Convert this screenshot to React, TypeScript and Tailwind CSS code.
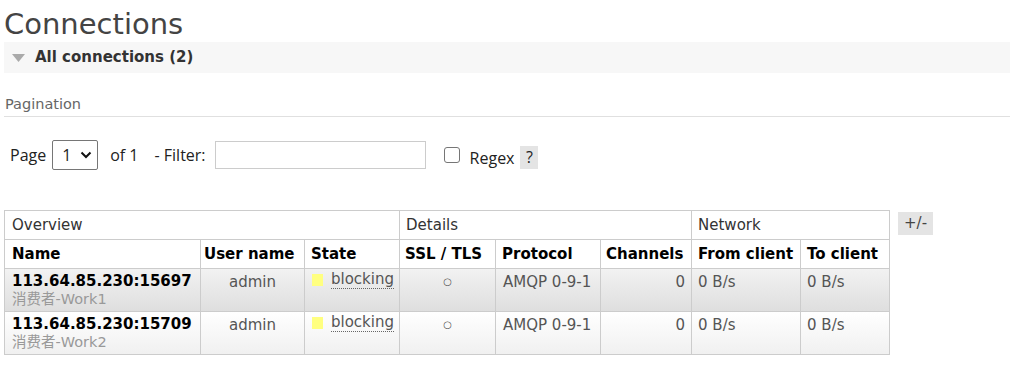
import React from "react";

const rows = [
  { name: "113.64.85.230:15697", client: "消费者-Work1", alt: true },
  { name: "113.64.85.230:15709", client: "消费者-Work2", alt: false },
];

const verdana = "font-['DejaVu_Sans','Noto_Sans_CJK_SC',sans-serif]";
const ui = "font-['Open_Sans','Noto_Sans',sans-serif]";

export default function App() {
  return (
    <div className={`${verdana} min-h-[369px] bg-white text-[#484848]`}>
      <h1 className="pl-[4px] pt-[6px] text-[29px] leading-[36px] text-[#444]">Connections</h1>

      {/* Section toggle */}
      <div className="ml-[4px] flex h-[31px] items-center bg-[#f7f7f7] pl-[8px]">
        <svg width="13" height="8" viewBox="0 0 13 8" className="mr-[10px]" aria-hidden>
          <path d="M0 0h13L6.5 8z" fill="#aaa" />
        </svg>
        <span className="text-[15px] font-bold text-[#333]">All connections (2)</span>
      </div>

      <div className="ml-[4px] mt-[22px] border-b border-[#e0e0e0] pb-[3px] pl-[1px] text-[14.5px] leading-[18px] text-[#666]">
        Pagination
      </div>

      {/* Pagination form */}
      <div className={`${ui} mt-[23px] flex items-center pl-[10px] text-[16px] text-[#222]`}>
        <span>Page</span>
        <div className="ml-[6px] flex h-[30px] w-[46px] items-center justify-between rounded-[2px] border border-[#767676] pl-[9px] pr-[5px]">
          <span>1</span>
          <svg width="12" height="8" viewBox="0 0 12 8" aria-hidden>
            <path d="M1.5 1.5l4.5 4.5 4.5-4.5" fill="none" stroke="#111" strokeWidth="2" />
          </svg>
        </div>
        <span className="ml-[12px]">of 1</span>
        <span className="ml-[16px]">- Filter:</span>
        <div className="ml-[9px] h-[28px] w-[211px] border border-[#ccc]" />
        <div className="ml-[18px] h-[16px] w-[16px] rounded-[3px] border border-[#767676]" />
        <span className="ml-[10px] mt-[6px]">Regex</span>
        <span className="ml-[6px] mt-[4px] flex h-[23px] w-[18px] items-center justify-center bg-[#e4e4e4] text-[16px]">?</span>
      </div>

      {/* Table */}
      <div className="ml-[4px] mt-[40px] flex items-start">
        <table className="w-[885px] table-fixed border-collapse text-[15px]">
          <colgroup>
            <col className="w-[196px]" />
            <col className="w-[104px]" />
            <col className="w-[95px]" />
            <col className="w-[96px]" />
            <col className="w-[105px]" />
            <col className="w-[91px]" />
            <col className="w-[109px]" />
            <col className="w-[89px]" />
          </colgroup>
          <thead>
            <tr className="h-[29px] text-[#333]">
              <th colSpan={3} className="border border-[#ccc] px-[7px] text-left font-normal">Overview</th>
              <th colSpan={3} className="border border-[#ccc] px-[6px] text-left font-normal">Details</th>
              <th colSpan={2} className="border border-[#ccc] px-[6px] text-left font-normal">Network</th>
            </tr>
            <tr className="h-[29px] whitespace-nowrap text-black">
              <th className="border border-[#ccc] px-[7px] text-left">Name</th>
              <th className="border border-[#ccc] px-[3px] text-left">User name</th>
              <th className="border border-[#ccc] px-[6px] text-left">State</th>
              <th className="border border-[#ccc] px-[5px] text-left">SSL / TLS</th>
              <th className="border border-[#ccc] px-[6px] text-left">Protocol</th>
              <th className="border border-[#ccc] px-[5px] text-left">Channels</th>
              <th className="border border-[#ccc] px-[6px] text-left">From client</th>
              <th className="border border-[#ccc] px-[6px] text-left">To client</th>
            </tr>
          </thead>
          <tbody>
            {rows.map((r) => (
              <tr
                key={r.name}
                className={`h-[43px] align-top text-[#555] ${
                  r.alt ? "bg-gradient-to-b from-[#f2f2f2] to-[#dedede]" : "bg-gradient-to-b from-[#ffffff] to-[#f0f0f0]"
                }`}
              >
                <td className="whitespace-nowrap border border-[#ccc] px-[7px] pt-[3px]">
                  <div className="font-bold leading-[18px] text-black">{r.name}</div>
                  <div className="text-[14.5px] leading-[19px] text-[#999]">{r.client}</div>
                </td>
                <td className="border border-[#ccc] pt-[2px] text-center">admin</td>
                <td className="whitespace-nowrap border border-[#ccc] pl-[7px] pt-[2px]">
                  <div className="flex items-center gap-[8px]">
                    <div className="h-[12px] w-[11px] shrink-0 bg-[#ffff80]" />
                    <span className="shrink-0 border-b border-dotted border-[#666] leading-[17px]">blocking</span>
                  </div>
                </td>
                <td className="border border-[#ccc] pt-[5px] text-center text-[10px]">○</td>
                <td className="whitespace-nowrap border border-[#ccc] px-[7px] pt-[2px]">AMQP 0-9-1</td>
                <td className="border border-[#ccc] px-[6px] pt-[2px] text-right">0</td>
                <td className="border border-[#ccc] px-[6px] pt-[2px]">0 B/s</td>
                <td className="border border-[#ccc] px-[6px] pt-[2px]">0 B/s</td>
              </tr>
            ))}
          </tbody>
        </table>
        <span className="ml-[8px] mt-[2px] flex h-[23px] w-[35px] items-center justify-center bg-[#e4e4e4] text-[15px] text-[#444]">
          +/-
        </span>
      </div>
    </div>
  );
}
